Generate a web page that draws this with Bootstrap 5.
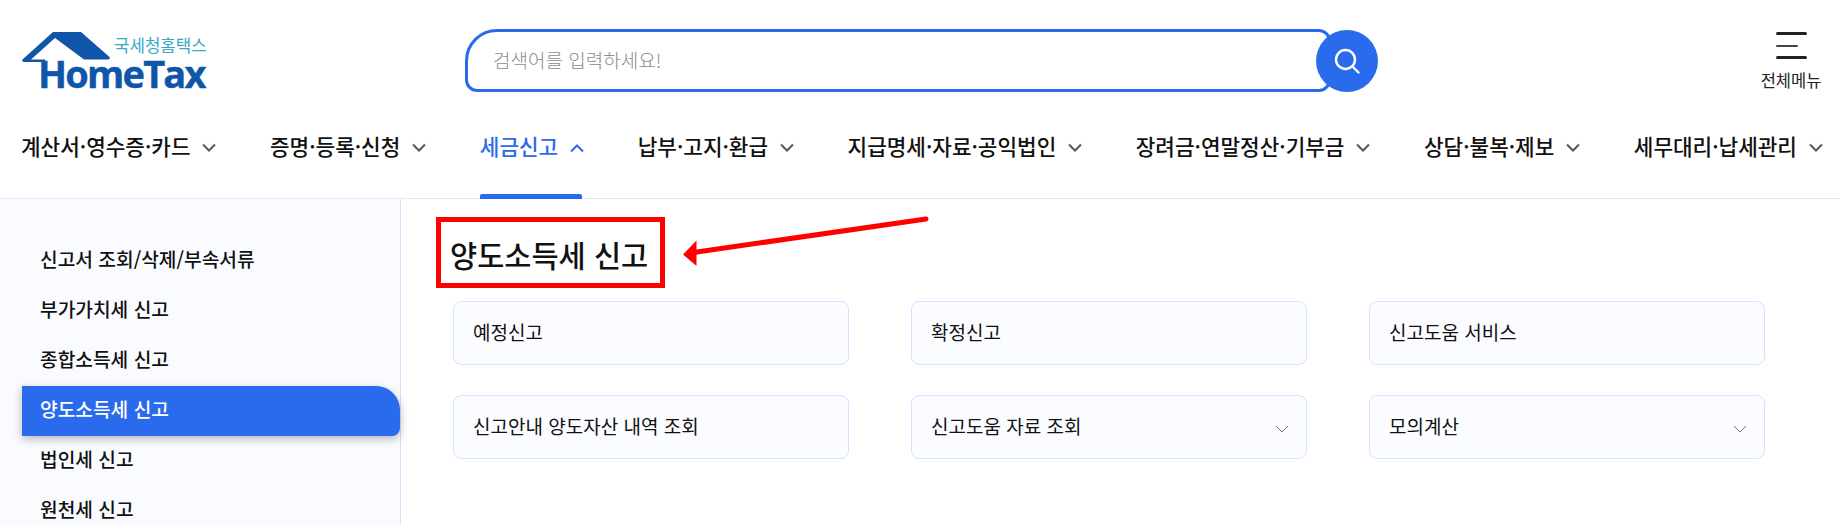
<!DOCTYPE html>
<html lang="ko">
<head>
  <meta charset="utf-8">
  <title>HomeTax</title>
  <link href="https://cdn.jsdelivr.net/npm/bootstrap@5.3.0/dist/css/bootstrap.min.css" rel="stylesheet">
  <style>
    body {
      font-family: "Noto Sans CJK KR", "Noto Sans", sans-serif;
      color: #111;
      height: 525px;
      overflow: hidden;
      background: #fff;
    }

    .top-bar {
      height: 110px;
      padding: 29px 19px 0 22px;
    }

    .logo-box {
      width: 443px;
      margin-top: 3px;
    }

    .search-box {
      width: 913px;
    }

    .search-input {
      height: 63px;
      width: 866px;
      border: 3px solid #2a6bee;
      border-radius: 32px 12px 12px 12px;
      padding: 0 25px 2px;
      font-size: 19px;
      font-weight: 300;
      outline: 0;
      color: #333;
    }

    .search-input::placeholder {
      color: #8c8c8c;
    }

    .search-btn {
      width: 62px;
      height: 62px;
      margin-left: -15px;
      background: #2a6bee;
      border: 0;
    }

    .all-menu {
      width: 60px;
      font-size: 16.500px;
      line-height: 18px;
      margin-top: 3px;
    }

    .burger {
      width: 31px;
      height: 27px;
      margin-bottom: 12px;
    }

    .burger i {
      display: block;
      background: #222;
      height: 3px;
      border-radius: 2px;
    }

    .burger i:nth-child(2) {
      height: 2px;
      width: 22px;
      background: #444;
    }

    .main-nav {
      height: 89px;
      padding: 0 16px 0 21px;
      border-bottom: 1px solid #e8e9ec;
      font-size: 21.300px;
      font-weight: 500;
    }

    .nav-item-top {
      height: 88px;
      padding-bottom: 16px;
      color: #111;
      text-decoration: none;
      position: relative;
    }

    .nav-item-top svg {
      margin: 4px 0 0 11px;
    }

    .nav-item-top.on {
      color: #2a6bee;
    }

    .nav-item-top.on::after {
      content: "";
      position: absolute;
      left: 0;
      width: 102px;
      bottom: -1px;
      height: 5px;
      background: #2a6bee;
      border-radius: 2px 2px 0 0;
    }

    .content-area {
      height: 326px;
      position: relative;
    }

    .side-menu {
      width: 401px;
      background: #f9fbff;
      border-right: 1px solid #d3e2ff;
      padding: 37px 0 0 22px;
      font-size: 19.200px;
      font-weight: 500;
    }

    .side-link {
      display: block;
      height: 50px;
      line-height: 46px;
      padding-left: 18px;
      color: #111;
      text-decoration: none;
    }

    .side-link.on {
      background: #2a6bee;
      color: #fff;
      border-radius: 0 24px 8px 0;
      box-shadow: 0 3px 10px rgba(0, 0, 0, .28);
      position: relative;
    }

    .page-body {
      padding: 18px 0 0 35px;
      width: 1400px;
    }

    .page-title {
      display: inline-block;
      border: 5px solid #f00;
      font-size: 29.500px;
      font-weight: 500;
      line-height: 60px;
      padding: 2px 12px 0 9px;
      height: 71px;
      margin: 0 0 13px;
    }

    .task-grid {
      display: grid;
      grid-template-columns: repeat(3, 396px);
      gap: 30px 62px;
      padding-left: 17px;
    }

    .task-card {
      height: 64px;
      background: #fbfcff;
      border: 1px solid #d3e2ff;
      border-radius: 8px;
      padding: 0 19px 2px;
      font-size: 19px;
      font-weight: 400;
    }

    .task-card svg {
      margin: 6px -3px 0 0;
    }

    .arrow-mark {
      position: absolute;
      left: 680px;
      top: 10px;
    }
  </style>
</head>
<body>
  <div class="top-bar d-flex align-items-start">
    <a class="logo-box d-block" href="#">
      <svg class="overflow-visible" width="190" height="72" viewBox="22 32 190 72">
        <path fill="#0f56a8" d="M22.500 59.500 53 32h28l28.500 25q1 2-1.500 2.500H84L55 38 31 59.500h14V62H24q-2.500-.500-1.500-2.500z"/>
        <text x="38" y="88" font-family="'Open Sans', sans-serif" font-weight="700" font-size="38" letter-spacing="-1.800" stroke="#0f56a8" stroke-width=".4" fill="#0f56a8">HomeTax</text>
        <text x="114" y="52" font-family="'Noto Sans CJK KR', sans-serif" font-size="16.800" fill="#36a9c9">국세청홈택스</text>
      </svg>
    </a>
    <form class="search-box d-flex align-items-center">
      <input class="search-input" type="text" placeholder="검색어를 입력하세요!">
      <button class="search-btn rounded-circle d-flex align-items-center justify-content-center" type="button" aria-label="검색">
        <svg width="30" height="30" viewBox="0 0 30 30" fill="none" stroke="#fff" stroke-width="2.400" stroke-linecap="round"><circle cx="13.500" cy="13.500" r="9.500"/><path d="M20.500 20.500l6 6"/></svg>
      </button>
    </form>
    <a class="all-menu ms-auto d-flex flex-column align-items-center text-decoration-none text-dark" href="#">
      <span class="burger d-flex flex-column justify-content-between"><i></i><i></i><i></i></span>
      <span class="text-nowrap">전체메뉴</span>
    </a>
  </div>

  <nav class="main-nav d-flex justify-content-between">
    <a class="nav-item-top d-flex align-items-center" href="#">계산서·영수증·카드<svg width="16" height="10" viewBox="0 0 16 10" fill="none" stroke="#555660" stroke-width="2"><path d="M2 1.500l6 6 6-6"/></svg></a>
    <a class="nav-item-top d-flex align-items-center" href="#">증명·등록·신청<svg width="16" height="10" viewBox="0 0 16 10" fill="none" stroke="#555660" stroke-width="2"><path d="M2 1.500l6 6 6-6"/></svg></a>
    <a class="nav-item-top on d-flex align-items-center" href="#">세금신고<svg width="16" height="10" viewBox="0 0 16 10" fill="none" stroke="#2a6bee" stroke-width="2"><path d="M2 8.500l6-6 6 6"/></svg></a>
    <a class="nav-item-top d-flex align-items-center" href="#">납부·고지·환급<svg width="16" height="10" viewBox="0 0 16 10" fill="none" stroke="#555660" stroke-width="2"><path d="M2 1.500l6 6 6-6"/></svg></a>
    <a class="nav-item-top d-flex align-items-center" href="#">지급명세·자료·공익법인<svg width="16" height="10" viewBox="0 0 16 10" fill="none" stroke="#555660" stroke-width="2"><path d="M2 1.500l6 6 6-6"/></svg></a>
    <a class="nav-item-top d-flex align-items-center" href="#">장려금·연말정산·기부금<svg width="16" height="10" viewBox="0 0 16 10" fill="none" stroke="#555660" stroke-width="2"><path d="M2 1.500l6 6 6-6"/></svg></a>
    <a class="nav-item-top d-flex align-items-center" href="#">상담·불복·제보<svg width="16" height="10" viewBox="0 0 16 10" fill="none" stroke="#555660" stroke-width="2"><path d="M2 1.500l6 6 6-6"/></svg></a>
    <a class="nav-item-top d-flex align-items-center" href="#">세무대리·납세관리<svg width="16" height="10" viewBox="0 0 16 10" fill="none" stroke="#555660" stroke-width="2"><path d="M2 1.500l6 6 6-6"/></svg></a>
  </nav>

  <div class="content-area d-flex">
    <aside class="side-menu">
      <a class="side-link" href="#">신고서 조회/삭제/부속서류</a>
      <a class="side-link" href="#">부가가치세 신고</a>
      <a class="side-link" href="#">종합소득세 신고</a>
      <a class="side-link on" href="#">양도소득세 신고</a>
      <a class="side-link" href="#">법인세 신고</a>
      <a class="side-link" href="#">원천세 신고</a>
    </aside>
    <main class="page-body">
      <h2 class="page-title">양도소득세 신고</h2>
      <div class="task-grid">
        <div class="task-card d-flex align-items-center">예정신고</div>
        <div class="task-card d-flex align-items-center">확정신고</div>
        <div class="task-card d-flex align-items-center">신고도움 서비스</div>
        <div class="task-card d-flex align-items-center justify-content-between">신고안내 양도자산 내역 조회</div>
        <div class="task-card d-flex align-items-center justify-content-between">신고도움 자료 조회<svg width="16" height="12" viewBox="0 0 16 12" fill="none" stroke="#777" stroke-width="1"><path d="M2 3l6 6 6-6"/></svg></div>
        <div class="task-card d-flex align-items-center justify-content-between">모의계산<svg width="16" height="12" viewBox="0 0 16 12" fill="none" stroke="#777" stroke-width="1"><path d="M2 3l6 6 6-6"/></svg></div>
      </div>
    </main>
    <svg class="arrow-mark" width="260" height="80" viewBox="680 208 260 80">
      <path fill="none" stroke="#f00" stroke-width="5" stroke-linecap="round" d="M926 218 690 252"/>
      <path fill="#f00" d="M683 253.500 696.500 239.500 696.500 265z"/>
    </svg>
  </div>

  <script src="https://cdn.jsdelivr.net/npm/bootstrap@5.3.0/dist/js/bootstrap.bundle.min.js"></script>
</body>
</html>
